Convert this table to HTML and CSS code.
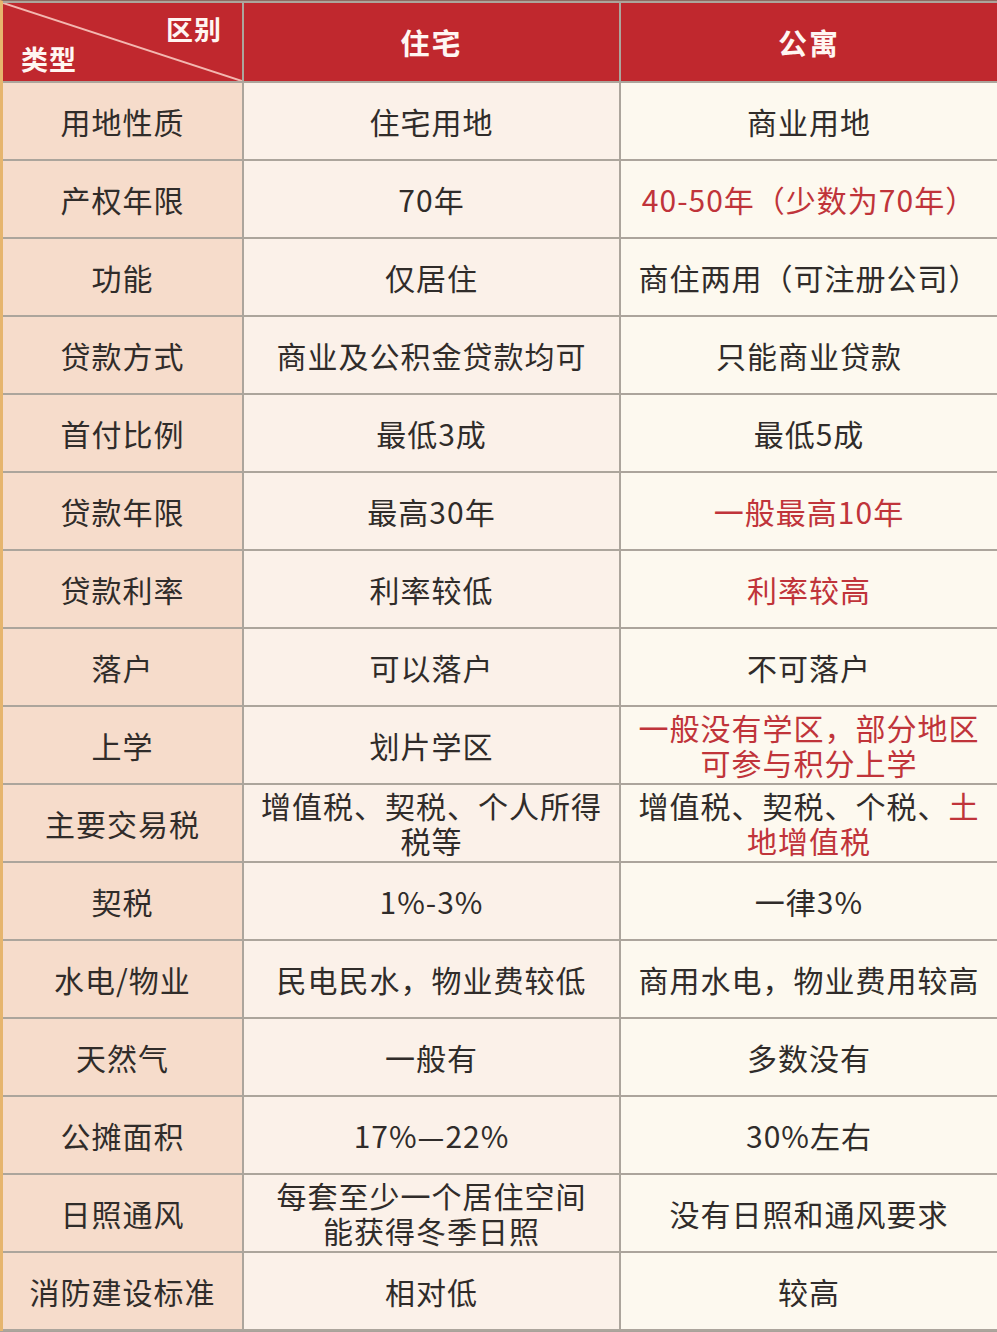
FILE: index.html
```html
<!DOCTYPE html>
<html lang="zh">
<head>
<meta charset="utf-8">
<link rel="stylesheet" href="styles.css">
</head>
<body>
<div class="table">
  <div class="hd corner">
    <svg class="diag" viewBox="0 0 239 78" preserveAspectRatio="none"><line x1="0" y1="0" x2="239" y2="78" stroke="#f3b7b0" stroke-width="2"/></svg>
    <span class="c-top">区别</span>
    <span class="c-bot">类型</span>
  </div>
  <div class="hd">住宅</div>
  <div class="hd">公寓</div>

  <div class="k"><p>用地性质</p></div><div class="a"><p>住宅用地</p></div><div class="b"><p>商业用地</p></div>
  <div class="k"><p>产权年限</p></div><div class="a"><p>70年</p></div><div class="b"><p class="red">40-50年（少数为70年）</p></div>
  <div class="k"><p>功能</p></div><div class="a"><p>仅居住</p></div><div class="b"><p>商住两用（可注册公司）</p></div>
  <div class="k"><p>贷款方式</p></div><div class="a"><p>商业及公积金贷款均可</p></div><div class="b"><p>只能商业贷款</p></div>
  <div class="k"><p>首付比例</p></div><div class="a"><p>最低3成</p></div><div class="b"><p>最低5成</p></div>
  <div class="k"><p>贷款年限</p></div><div class="a"><p>最高30年</p></div><div class="b"><p class="red">一般最高10年</p></div>
  <div class="k"><p>贷款利率</p></div><div class="a"><p>利率较低</p></div><div class="b"><p class="red">利率较高</p></div>
  <div class="k"><p>落户</p></div><div class="a"><p>可以落户</p></div><div class="b"><p>不可落户</p></div>
  <div class="k"><p>上学</p></div><div class="a"><p>划片学区</p></div><div class="b"><p class="red">一般没有学区，部分地区<br>可参与积分上学</p></div>
  <div class="k"><p>主要交易税</p></div><div class="a"><p>增值税、契税、个人所得<br>税等</p></div><div class="b"><p>增值税、契税、个税、<span class="red">土<br>地增值税</span></p></div>
  <div class="k"><p>契税</p></div><div class="a"><p>1%-3%</p></div><div class="b"><p>一律3%</p></div>
  <div class="k"><p>水电/物业</p></div><div class="a"><p>民电民水，物业费较低</p></div><div class="b"><p>商用水电，物业费用较高</p></div>
  <div class="k"><p>天然气</p></div><div class="a"><p>一般有</p></div><div class="b"><p>多数没有</p></div>
  <div class="k"><p>公摊面积</p></div><div class="a"><p>17%—22%</p></div><div class="b"><p>30%左右</p></div>
  <div class="k"><p>日照通风</p></div><div class="a"><p>每套至少一个居住空间<br>能获得冬季日照</p></div><div class="b"><p>没有日照和通风要求</p></div>
  <div class="k"><p>消防建设标准</p></div><div class="a"><p>相对低</p></div><div class="b"><p>较高</p></div>
</div>
</body>
</html>
```

FILE: styles.css
```css
html, body {
  margin: 0;
  padding: 0;
  background: #a8a29a;
}
body {
  width: 997px;
  height: 1332px;
  overflow: hidden;
  font-family: "Noto Sans CJK SC", "Noto Sans", sans-serif;
}
.table {
  display: grid;
  grid-template-columns: 239px 375px 376px;
  grid-template-rows: 78px repeat(16, 76px);
  column-gap: 2px;
  row-gap: 2px;
  padding-top: 2px;
  padding-bottom: 2px;
  border-top: 1px solid #8e6a62;
  border-left: 3px solid #e6b56e;
  background: #aca59c;
}
.hd {
  background: #c0282e;
  color: #fff6f2;
  font-weight: 700;
  font-size: 29px;
  display: flex;
  align-items: center;
  justify-content: center;
  letter-spacing: 2px;
}
.corner {
  position: relative;
  display: block;
}
.diag {
  position: absolute;
  left: 0;
  top: 0;
  width: 239px;
  height: 78px;
}
.c-top {
  position: absolute;
  right: 20px;
  top: 10px;
  font-size: 27px;
  line-height: 32px;
  letter-spacing: 1px;
}
.c-bot {
  position: absolute;
  left: 18px;
  top: 40px;
  font-size: 27px;
  line-height: 32px;
  letter-spacing: 1px;
}
.k, .a, .b {
  display: flex;
  align-items: center;
  justify-content: center;
  text-align: center;
  color: #302c2a;
}
.k p, .a p, .b p {
  margin: 0;
  font-size: 30px;
  line-height: 35px;
  letter-spacing: 1px;
  white-space: nowrap;
}
.k { background: #f6dccb; }
.a { background: #fbf1e9; }
.b { background: #fdf9ef; }
.red { color: #c0343a; }
```
